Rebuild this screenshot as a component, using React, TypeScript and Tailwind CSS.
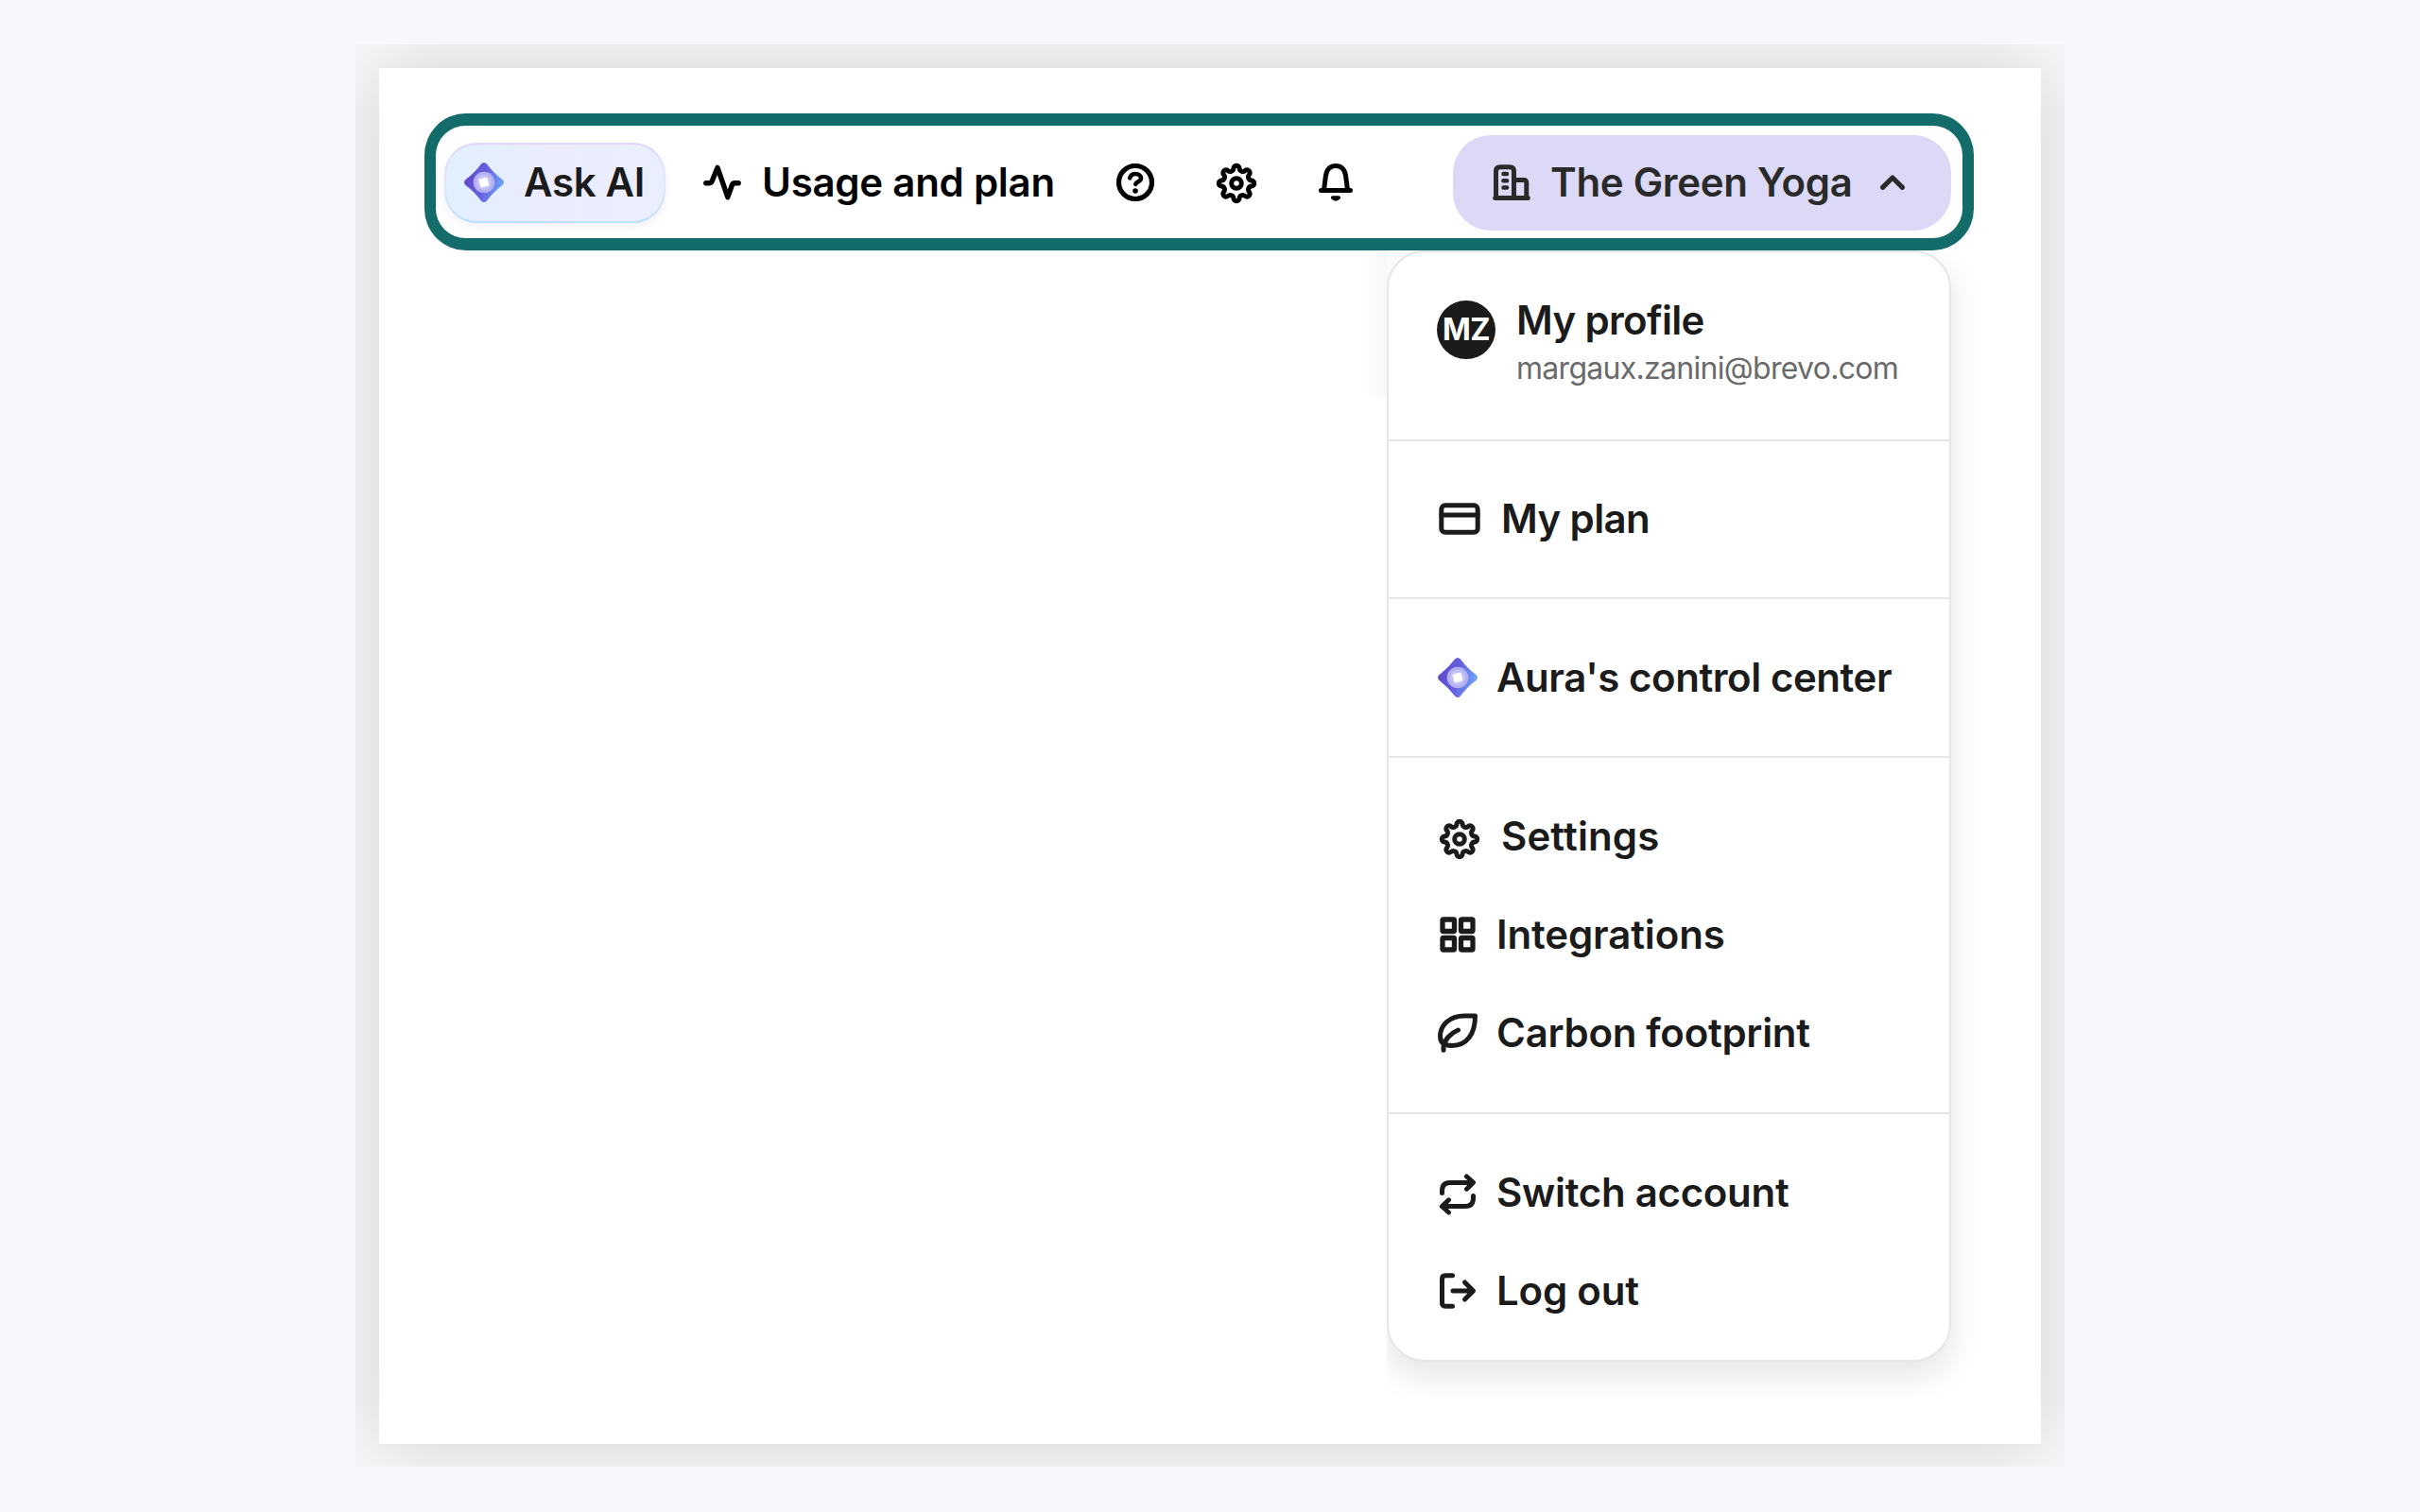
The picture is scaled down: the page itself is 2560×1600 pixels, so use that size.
import React from "react";

const GEAR = (() => {
  const pt = (deg: number) => {
    const a = (deg * Math.PI) / 180;
    return `${(16.2 * Math.sin(a)).toFixed(2)} ${(-16.2 * Math.cos(a)).toFixed(2)}`;
  };
  let d = `M${pt(-11)}`;
  for (let k = 0; k < 8; k++) {
    d += `A3.1 3.1 0 0 1 ${pt(k * 45 + 11)}A3.6 3.6 0 0 0 ${pt(k * 45 + 34)}`;
  }
  return d + "Z";
})();

function Icon({ children, width = 5.2 }: { children: React.ReactNode; width?: number }) {
  return (
    <svg
      viewBox="-24 -24 48 48"
      className="size-12 shrink-0 overflow-visible"
      fill="none"
      stroke="currentColor"
      strokeWidth={width}
      strokeLinecap="round"
      strokeLinejoin="round"
    >
      {children}
    </svg>
  );
}

function AuraIcon() {
  return (
    <svg viewBox="-24 -24 48 48" className="size-12 shrink-0">
      <defs>
        <linearGradient id="aura" x1="0" y1="0.35" x2="1" y2="0.6">
          <stop offset="0" stopColor="#5f49c8" />
          <stop offset="0.5" stopColor="#6660df" />
          <stop offset="1" stopColor="#6fa8fb" />
        </linearGradient>
      </defs>
      <path
        d="M-3 -19.5Q0 -22.5 3 -19.5Q10 -10 19.5 -3Q22.5 0 19.5 3Q10 10 3 19.5Q0 22.5 -3 19.5Q-10 10 -19.5 3Q-22.5 0 -19.5 -3Q-10 -10 -3 -19.5Z"
        fill="url(#aura)"
      />
      <circle r="11.3" fill="#b3aff0" />
      <circle r="8" fill="#c4c2f6" />
      <rect x="-4.6" y="-4.6" width="9.2" height="9.2" rx="1.3" fill="#fff" transform="rotate(-14)" />
    </svg>
  );
}

const ActivityIcon = () => (
  <Icon width={5.4}>
    <path d="M-17.2 .7H-13.5Q-11.5 .7 -10.8 -1.3L-5 -15.6L5.8 15.6L10.5 2.5Q11.2 .7 13 .7H17.2" />
  </Icon>
);

const HelpIcon = () => (
  <Icon>
    <circle r="17.5" />
    <path d="M-5.8 -4.6C-4.8 -10.8 6 -10.4 6 -4.3C6 -1 1.5 -.8 .3 1.8" strokeWidth="4.6" />
    <circle cy="9" r="2.8" fill="currentColor" stroke="none" />
  </Icon>
);

const GearIcon = () => (
  <Icon width={5}>
    <path d={GEAR} />
    <circle r="5.3" />
  </Icon>
);

const BellIcon = () => (
  <Icon width={5}>
    <path d="M-15.5 8.5H15.5M-12.5 8L-10.5 -7.5C-9.5 -14 -5.5 -17.5 0 -17.5S9.5 -14 10.5 -7.5L12.5 8" />
    <path d="M-3.2 16.2Q0 19.2 3.2 16.2Z" strokeWidth="3.8" />
  </Icon>
);

const BuildingIcon = () => (
  <Icon width={5}>
    <path d="M-17.3 16.5H17.3M-16.5 16.5V-12Q-16.5 -16.3 -12 -16.3H-2Q2.5 -16.3 2.5 -12V16.5M2.5 -2.5H13Q15.8 -2.5 15.8 .5V16.5" />
    <path d="M-8.5 -9H-5M-8.5 -1.8H-5M-8.5 5.5H-5" strokeWidth="4.6" />
  </Icon>
);

const CardIcon = () => (
  <Icon width={5}>
    <rect x="-19.2" y="-14.2" width="38.4" height="28.4" rx="4" />
    <path d="M-19 -4H19" />
  </Icon>
);

const GridIcon = () => (
  <Icon width={5.3}>
    <rect x="-16" y="-16" width="12.5" height="12.5" rx="1" />
    <rect x="3.5" y="-16" width="12.5" height="12.5" rx="1" />
    <rect x="-16" y="3.5" width="12.5" height="12.5" rx="1" />
    <rect x="3.5" y="3.5" width="12.5" height="12.5" rx="1" />
  </Icon>
);

const LeafIcon = () => (
  <Icon width={5}>
    <path d="M18.5 -18H7C-8.5 -18 -18.5 -8 -18.5 3.5C-18.5 10.5 -13.5 13.5 -6 13.5C9.5 13.5 18.5 1.5 18.5 -18Z" />
    <path d="M-15 18.3V15C-14 7.5 -8 .5 .5 -3" />
  </Icon>
);

const SwitchIcon = () => (
  <Icon width={5}>
    <path d="M-16.5 -1.5V-4Q-16.5 -12.6 -8 -12.6H16M9.5 -19L16.5 -12.6L9.5 -5.8" />
    <path d="M16.5 1.5V4Q16.5 12.6 8 12.6H-16M-9.5 19L-16.5 12.6L-9.5 5.8" />
  </Icon>
);

const LogoutIcon = () => (
  <Icon width={5}>
    <path d="M-5.5 -16.3H-12.5Q-16.5 -16.3 -16.5 -12.5V12.5Q-16.5 16.3 -12.5 16.3H-5.5" />
    <path d="M-5 0H16M7.5 -9L16.5 0L7.5 9" />
  </Icon>
);

function MenuItem({ icon, label, className = "" }: { icon: React.ReactNode; label: string; className?: string }) {
  return (
    <a className="flex h-[104px] items-center pl-[50px]">
      {icon}
      <span className={`whitespace-nowrap ${className}`}>{label}</span>
    </a>
  );
}

export default function App() {
  return (
    <div className="h-[1600px] w-[2560px] overflow-hidden bg-[#f7f8fb] pl-[376px] pt-[47px] font-['Inter',sans-serif] text-[42px] leading-[50px] font-[630] text-[#1b1b1b]">
      <div className="h-[1505px] w-[1808px] overflow-hidden bg-[#f7f8f9] p-[25px]">
        <div className="h-[1456px] w-[1758px] bg-white pl-12 pt-12 shadow-[0_0_80px_rgba(0,0,0,0.16)]">
          <header className="flex h-[145px] w-[1639px] items-center rounded-[44px] border-x-12 border-y-13 border-[#136b6a] text-black">
            <button className="mt-px ml-[9px] flex h-[85px] w-[234px] items-center rounded-[34px] bg-linear-to-b from-[#dfd5fb] via-[#e4e9fd] to-[#b9defb] p-0.5 shadow-[0_4px_8px_rgba(80,80,160,0.08)]">
              <span className="flex h-full w-full items-center rounded-[32px] bg-linear-to-r from-[#e1f0ff] via-[#ececfd] to-[#eaeffd] pl-[16px] text-[#1b1b1b]">
                <AuraIcon />
                <span className="ml-[18px] whitespace-nowrap tracking-[-0.3px]">Ask AI</span>
              </span>
            </button>
            <a className="ml-9 flex items-center">
              <ActivityIcon />
              <span className="ml-[18px] w-[309px] whitespace-nowrap tracking-[-0.25px]">Usage and plan</span>
            </a>
            <div className="ml-[62px] flex items-center">
              <HelpIcon />
              <span className="mt-0.5 ml-[59px]"><GearIcon /></span>
              <span className="ml-[57px]"><BellIcon /></span>
            </div>
            <button className="mt-px mr-3 ml-auto flex h-[101px] w-[527px] items-center rounded-[40px] bg-[#dcd9f6] pl-[38px] text-[#2a2a2a]">
              <BuildingIcon />
              <span className="ml-[17px] w-[338px] text-left whitespace-nowrap tracking-[-0.3px]">The Green Yoga</span>
              <Icon>
                <path d="M-10.5 5.3L0 -5L10.5 5.3" />
              </Icon>
            </button>
          </header>

          <div className="relative ml-[1018px] w-[597px]">
            {/* soft edge left of the first section */}
            <div className="absolute top-0 -left-6 h-[155px] w-6 bg-linear-to-l from-[#f8f8f8] to-white" />
            <nav className="relative h-[1176px] rounded-[40px] border-2 border-[#e6e6e6] bg-white shadow-[0_14px_36px_rgba(0,0,0,0.11)] [clip-path:inset(0_-40px_-40px_0)]">
              <section className="flex h-[200px] border-b-2 border-[#e6e6e6] pl-[51px]">
                <span className="mt-[51px] flex size-[62px] items-center justify-center rounded-full bg-[#1b1b1b] text-[32px] font-bold tracking-[-0.5px] text-white">
                  MZ
                </span>
                <div className="mt-[47px] ml-[22px]">
                  <p className="tracking-[-0.65px]">My profile</p>
                  <p className="mt-px text-[32px] leading-[50px] font-[430] tracking-[-0.7px] text-[#6a6a6a]">margaux.zanini@brevo.com</p>
                </div>
              </section>
              <section className="h-[167px] border-b-2 border-[#e6e6e6] pt-[30px]">
                <MenuItem icon={<span className="ml-px"><CardIcon /></span>} label="My plan" className="ml-[20px] tracking-[-0.6px]" />
              </section>
              <section className="h-[168px] border-b-2 border-[#e6e6e6] pt-[31px]">
                <MenuItem icon={<span className="-ml-px"><AuraIcon /></span>} label="Aura's control center" className="ml-[17px] tracking-[-0.45px]" />
              </section>
              <section className="h-[377px] border-b-2 border-[#e6e6e6] pt-[31px]">
                <MenuItem icon={<span className="mt-1.5 ml-px"><GearIcon /></span>} label="Settings" className="ml-[20px] tracking-[0.1px]" />
                <MenuItem icon={<span className="-ml-px"><GridIcon /></span>} label="Integrations" className="ml-[17px] tracking-[-0.15px]" />
                <MenuItem icon={<span className="-ml-px"><LeafIcon /></span>} label="Carbon footprint" className="ml-[17px] tracking-[-0.3px]" />
              </section>
              <section className="pt-[31px]">
                <MenuItem icon={<span className="mt-1 -ml-px"><SwitchIcon /></span>} label="Switch account" className="ml-[17px] tracking-[-0.3px]" />
                <MenuItem icon={<span className="-ml-px"><LogoutIcon /></span>} label="Log out" className="ml-[17px] tracking-[-0.2px]" />
              </section>
            </nav>
          </div>
        </div>
      </div>
    </div>
  );
}
